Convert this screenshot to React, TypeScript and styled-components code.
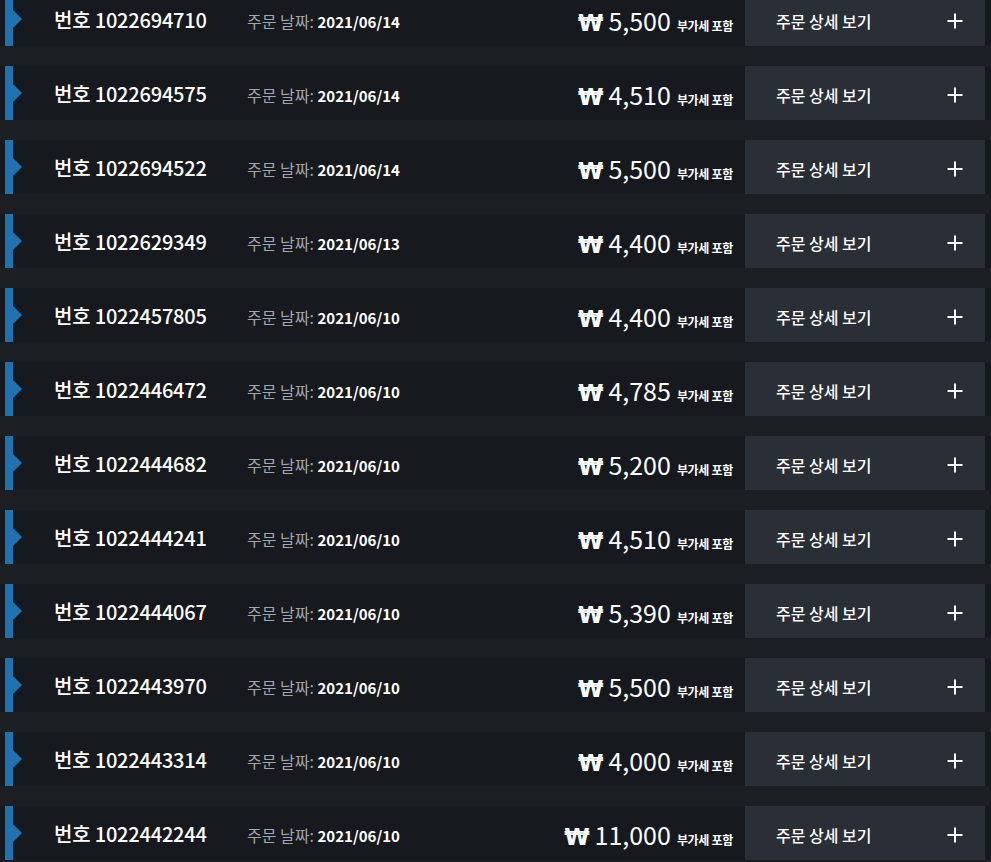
import React from "react";
import styled, { createGlobalStyle } from "styled-components";

const GlobalStyle = createGlobalStyle`
  html, body {
    margin: 0;
    padding: 0;
    background: #1b1f23;
    overflow: hidden;
  }
  body {
    font-family: "Noto Sans CJK KR", "Noto Sans", sans-serif;
    color: #ffffff;
  }
`;

const List = styled.div`
  display: flex;
  flex-direction: column;
  gap: 20px;
  margin-top: -8px;
`;

const Row = styled.div`
  display: flex;
  align-items: center;
  height: 54px;
  background: #16191d;
  padding-right: 6px;
`;

const Marker = styled.div`
  position: relative;
  flex: none;
  width: 8px;
  height: 100%;
  margin-left: 5px;
  background: #1f73b3;
  &::after {
    content: "";
    position: absolute;
    left: 8px;
    top: 50%;
    transform: translateY(-50%);
    border-top: 9px solid transparent;
    border-bottom: 9px solid transparent;
    border-left: 9px solid #1f73b3;
  }
`;

const OrderNo = styled.div`
  flex: none;
  width: 193px;
  margin-left: 41px;
  font-size: 20px;
  font-weight: 500;
  color: #ffffff;
  letter-spacing: -0.2px;
`;

const DateLine = styled.div`
  flex: none;
  font-size: 16px;
  padding-top: 3px;
  color: #a3a6aa;
  font-weight: 400;
  & b {
    font-size: 15px;
    color: #ffffff;
    font-weight: 700;
  }
`;

const Price = styled.div`
  flex: 1;
  display: flex;
  justify-content: flex-end;
  align-items: baseline;
  padding-right: 12px;
  padding-top: 2px;
`;

const Won = styled.span`
  font-family: "DejaVu Sans", sans-serif;
  font-size: 23px;
  font-weight: 700;
  margin-right: 6px;
  letter-spacing: -1px;
`;

const Amount = styled.span`
  font-size: 25px;
  font-weight: 400;
`;

const Vat = styled.span`
  font-size: 12px;
  font-weight: 700;
  margin-left: 6px;
  letter-spacing: -0.3px;
`;

const DetailButton = styled.div`
  flex: none;
  width: 240px;
  height: 100%;
  box-sizing: border-box;
  display: flex;
  align-items: center;
  justify-content: space-between;
  padding: 3px 22px 0 31px;
  background: #2a2e35;
  font-size: 16px;
  font-weight: 500;
  color: #ffffff;
`;

const PlusIcon = () => (
  <svg width="16" height="16" viewBox="0 0 16 16" aria-hidden="true">
    <line x1="8" y1="0.5" x2="8" y2="15.5" stroke="#ffffff" strokeWidth="2" />
    <line x1="0.5" y1="8" x2="15.5" y2="8" stroke="#ffffff" strokeWidth="2" />
  </svg>
);

const orders = [
  { no: "1022694710", date: "2021/06/14", price: "5,500" },
  { no: "1022694575", date: "2021/06/14", price: "4,510" },
  { no: "1022694522", date: "2021/06/14", price: "5,500" },
  { no: "1022629349", date: "2021/06/13", price: "4,400" },
  { no: "1022457805", date: "2021/06/10", price: "4,400" },
  { no: "1022446472", date: "2021/06/10", price: "4,785" },
  { no: "1022444682", date: "2021/06/10", price: "5,200" },
  { no: "1022444241", date: "2021/06/10", price: "4,510" },
  { no: "1022444067", date: "2021/06/10", price: "5,390" },
  { no: "1022443970", date: "2021/06/10", price: "5,500" },
  { no: "1022443314", date: "2021/06/10", price: "4,000" },
  { no: "1022442244", date: "2021/06/10", price: "11,000" },
];

export default function App() {
  return (
    <>
      <GlobalStyle />
      <List>
        {orders.map((o) => (
          <Row key={o.no}>
            <Marker />
            <OrderNo>번호 {o.no}</OrderNo>
            <DateLine>
              주문 날짜: <b>{o.date}</b>
            </DateLine>
            <Price>
              <Won>₩</Won>
              <Amount>{o.price}</Amount>
              <Vat>부가세 포함</Vat>
            </Price>
            <DetailButton>
              <span>주문 상세 보기</span>
              <PlusIcon />
            </DetailButton>
          </Row>
        ))}
      </List>
    </>
  );
}
